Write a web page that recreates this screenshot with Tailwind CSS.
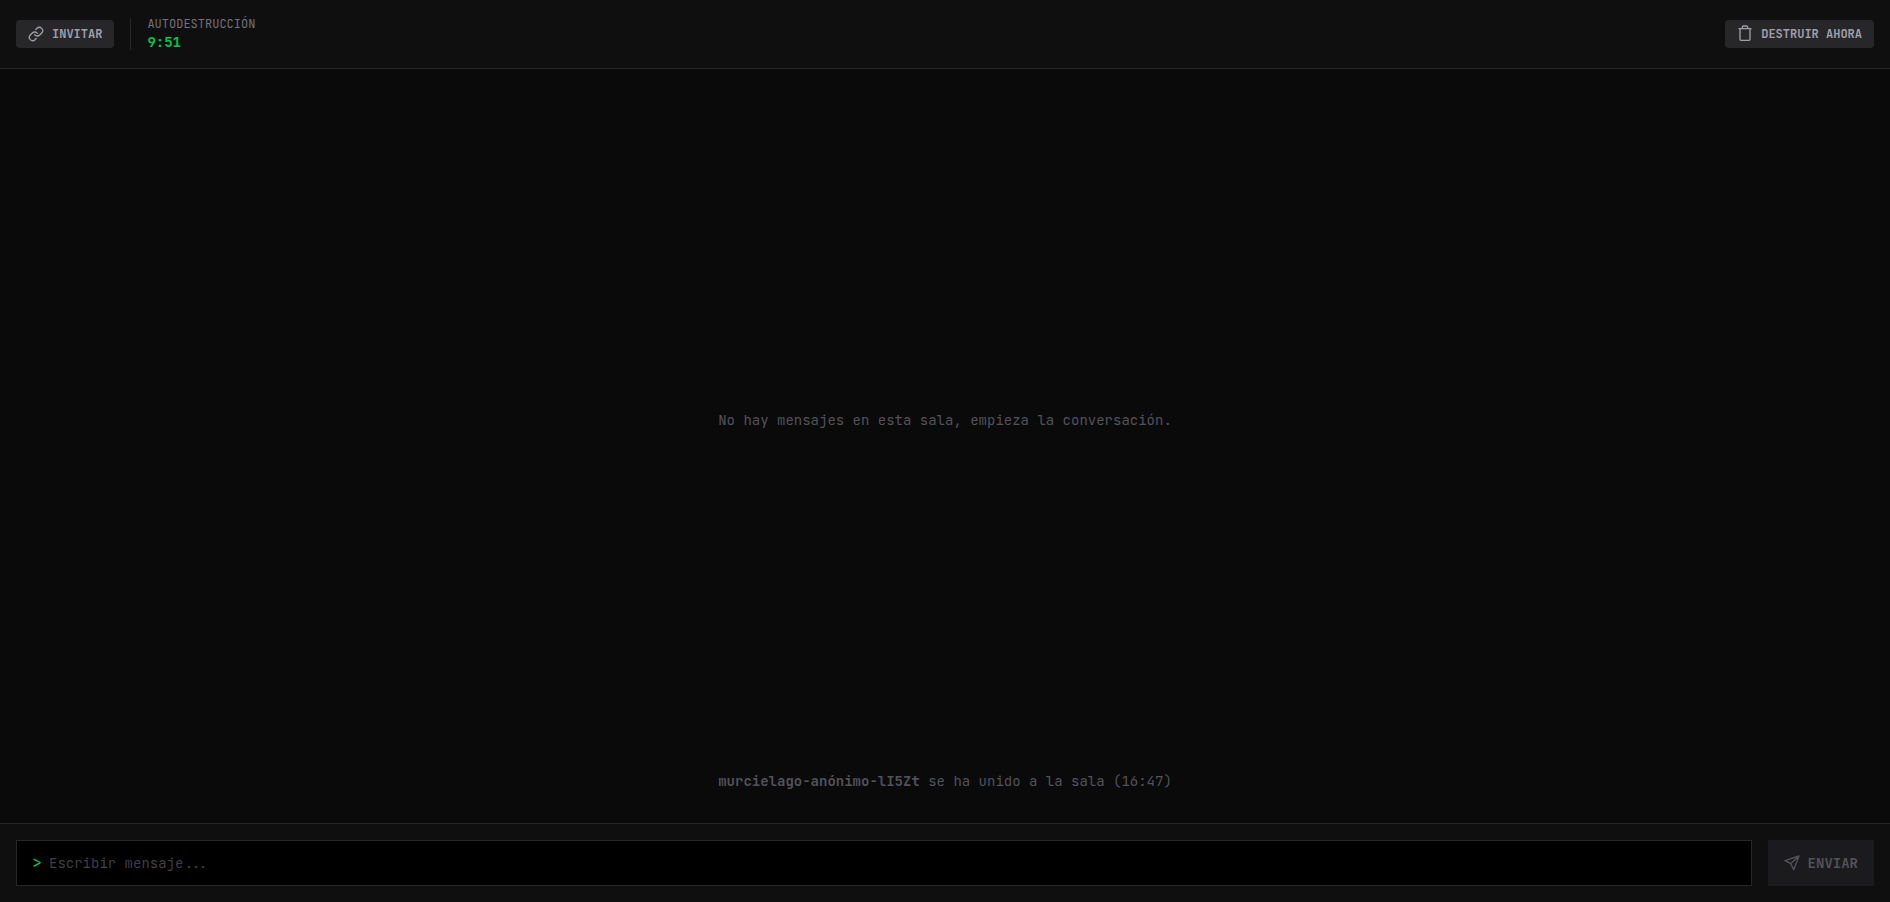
<!DOCTYPE html>
<html lang="es">
<head>
  <meta charset="UTF-8" />
  <meta name="viewport" content="width=device-width, initial-scale=1.0"/>
  <title>Sala privada</title>
  <script src="https://cdn.jsdelivr.net/npm/@tailwindcss/browser@4"></script>
  <style>
    body, button, input {
      font-family: 'JetBrains Mono', 'DejaVu Sans Mono', 'Liberation Mono', monospace;
    }
  </style>
</head>
<body class="bg-[#0a0a0a] text-[#52525c] text-sm h-screen flex flex-col">

  <header class="bg-[#0f0f0f] border-b border-[#27272a] p-4 flex items-center justify-between">
    <div class="flex items-center gap-4">
      <button type="button" class="flex items-center gap-2 bg-[#27272a] text-[#9f9fa9] text-xs font-bold rounded px-3 py-1.5">
        <svg class="size-4" viewBox="0 0 24 24" fill="none" stroke="currentColor" stroke-width="2" stroke-linecap="round" stroke-linejoin="round" aria-hidden="true">
          <path d="M10 13a5 5 0 0 0 7.54.54l3-3a5 5 0 0 0-7.07-7.07l-1.72 1.71"/>
          <path d="M14 11a5 5 0 0 0-7.54-.54l-3 3a5 5 0 0 0 7.07 7.07l1.71-1.71"/>
        </svg>
        INVITAR
      </button>
      <div class="h-8 w-px bg-[#27272a]"></div>
      <div>
        <p class="text-xs text-[#71717b]">AUTODESTRUCCIÓN</p>
        <p id="timer" class="text-sm font-bold text-[#00c950]">9:51</p>
      </div>
    </div>
    <button type="button" class="flex items-center gap-2 bg-[#27272a] text-[#9f9fa9] text-xs font-bold rounded px-3 py-1.5">
      <svg class="size-4 overflow-visible" viewBox="0 0 24 24" fill="none" stroke="currentColor" stroke-width="2" stroke-linecap="round" stroke-linejoin="round" aria-hidden="true">
        <path d="M3 4h18M4.500 4v16a1.500 1.500 0 0 0 1.500 1.500h12a1.500 1.500 0 0 0 1.500-1.500V4M8 4V2a2 2 0 0 1 2-2h4a2 2 0 0 1 2 2v2"/>
      </svg>
      DESTRUIR AHORA
    </button>
  </header>

  <main class="flex-1 flex flex-col pb-8">
    <div class="flex-1 flex items-center justify-center">
      <p>No hay mensajes en esta sala, empieza la conversación.</p>
    </div>
    <p class="text-center"><span class="font-bold">murcielago-anónimo-lI5Zt</span> se ha unido a la sala (16:47)</p>
  </main>

  <footer class="bg-[#0f0f0f] border-t border-[#27272a] p-4">
    <form id="messageForm" class="flex gap-4">
      <label class="flex-1 flex items-center gap-2 bg-black border border-[#27272a] px-4 py-3">
        <span class="flex justify-center w-2 text-base/5 text-[#00c950]">&gt;</span>
        <input type="text" aria-label="Mensaje" placeholder="Escribir mensaje..." class="flex-1 h-5 text-[#d4d4d8] placeholder:text-[#3f3f46] focus:outline-none">
      </label>
      <button type="submit" disabled class="flex items-center gap-2 bg-[#1b1b1d] font-bold px-4">
        <svg class="size-4" viewBox="0 0 24 24" fill="none" stroke="currentColor" stroke-width="2" stroke-linejoin="round" aria-hidden="true">
          <path d="M22.500 1.500 1.500 8.500 10 13l4.500 9zM22.500 1.500 10 13"/>
        </svg>
        ENVIAR
      </button>
    </form>
  </footer>

</body>
</html>
